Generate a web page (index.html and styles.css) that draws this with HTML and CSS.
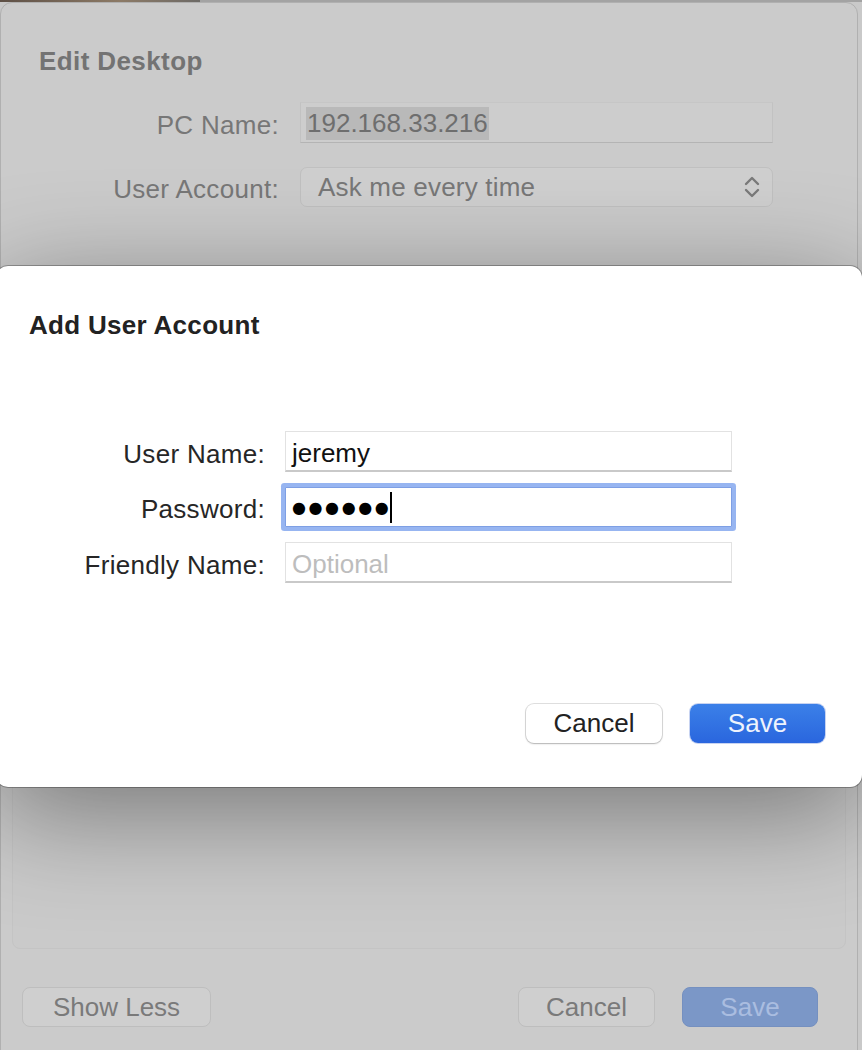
FILE: index.html
```html
<!DOCTYPE html>
<html>
<head>
<meta charset="utf-8">
<link rel="stylesheet" href="styles.css">
</head>
<body>
<div class="window">
  <div class="win-title">Edit Desktop</div>
  <div class="win-form">
    <div class="w-label">PC Name:</div>
    <div class="w-field"><span class="sel">192.168.33.216</span></div>
    <div class="w-label">User Account:</div>
    <div class="w-popup">
      <span>Ask me every time</span>
      <svg class="chev" width="16" height="24" viewBox="0 0 16 24"><path d="M2 9 L8 3 L14 9 M2 15 L8 21 L14 15" fill="none" stroke="#7a7a7a" stroke-width="2.4" stroke-linecap="round" stroke-linejoin="round"/></svg>
    </div>
  </div>
  <div class="win-box"></div>
  <div class="win-buttons">
    <div class="w-btn show-less">Show Less</div>
    <div class="spacer"></div>
    <div class="w-btn w-cancel">Cancel</div>
    <div class="w-btn w-save">Save</div>
  </div>
</div>

<div class="sheet">
  <div class="sheet-title">Add User Account</div>
  <div class="sheet-form">
    <div class="s-label">User Name:</div>
    <div class="s-field">jeremy</div>
    <div class="s-label">Password:</div>
    <div class="s-field focused"><span class="dots">●●●●●●</span><span class="caret"></span></div>
    <div class="s-label">Friendly Name:</div>
    <div class="s-field placeholder">Optional</div>
  </div>
  <div class="sheet-buttons">
    <div class="s-btn s-cancel">Cancel</div>
    <div class="s-btn s-save">Save</div>
  </div>
</div>
</body>
</html>
```
FILE: styles.css
```css
html, body {
  margin: 0;
  padding: 0;
}
body {
  width: 862px;
  height: 1050px;
  overflow: hidden;
  position: relative;
  font-family: "Liberation Sans", Arial, sans-serif;
  font-size: 26px;
  background:
    linear-gradient(to right, #5e5046 0, #8c7a66 120px, #6d6a66 200px, #a3a3a3 200px) top left / 100% 2px no-repeat,
    #c9c9c9;
}

/* ---------- background (dimmed) window ---------- */
.window {
  margin-top: 2px;
  width: 858px;
  height: 1060px;
  box-sizing: border-box;
  background: #cbcbcb;
  border: 1px solid #b0b0b0;
  border-radius: 12px;
  display: flex;
  flex-direction: column;
  color: #777;
}
.win-title {
  font-weight: bold;
  letter-spacing: 0.4px;
  line-height: 30px;
  padding: 43px 0 0 38px;
  color: #737373;
}
.win-form {
  margin-top: 26px;
  display: grid;
  grid-template-columns: 278px 473px;
  column-gap: 21px;
  row-gap: 24px;
  align-items: center;
}
.w-label {
  text-align: right;
  letter-spacing: 0.3px;
  line-height: 30px;
  padding-top: 4px;
}
.w-field {
  height: 41px;
  box-sizing: border-box;
  border: 1px solid #c2c2c2;
  border-top-color: #c6c6c6;
  border-bottom-color: #b4b4b4;
  background: #cdcdcd;
  padding: 4px 0 0 5px;
  line-height: 33px;
}
.sel {
  background: #b9b9b9;
  display: inline-block;
  padding: 0 1px;
  color: #6e6e6e;
}
.w-popup {
  height: 40px;
  box-sizing: border-box;
  border: 1px solid #c0c0c0;
  border-radius: 7px;
  background: #cfcfcf;
  padding: 0 12px 0 17px;
  display: flex;
  align-items: center;
  justify-content: space-between;
  line-height: 30px;
  letter-spacing: 0.2px;
  color: #777;
}
.chev {
  display: block;
}
.win-box {
  margin: 90px 11px 0 11px;
  height: 650px;
  background: #cacaca;
  border: 1px solid #c4c4c4;
  border-radius: 8px;
}
.win-buttons {
  margin-top: 38px;
  display: flex;
  padding: 0 39px 0 21px;
}
.spacer {
  flex: 1;
}
.w-btn {
  height: 40px;
  box-sizing: border-box;
  border: 1px solid #bebebe;
  border-radius: 8px;
  background: #cfcfcf;
  color: #7a7a7a;
  text-align: center;
  line-height: 38px;
}
.show-less {
  width: 189px;
}
.w-cancel {
  width: 137px;
}
.w-save {
  width: 136px;
  margin-left: 27px;
  background: #7b97c7;
  border-color: #7590c0;
  color: #aabde0;
}

/* ---------- sheet (modal) ---------- */
.sheet {
  position: absolute;
  top: 266px;
  left: -4px;
  width: 866px;
  height: 521px;
  box-sizing: border-box;
  background: #ffffff;
  border-radius: 12px;
  box-shadow: 0 0 0 1px rgba(0, 0, 0, 0.28), 0 24px 110px rgba(0, 0, 0, 0.42);
  display: flex;
  flex-direction: column;
  color: #222;
  padding: 0 37px 44px 0;
}
.sheet-title {
  font-weight: bold;
  letter-spacing: 0.3px;
  line-height: 30px;
  padding: 44px 0 0 33px;
  color: #222;
}
.sheet-form {
  margin-top: 91px;
  display: grid;
  grid-template-columns: 269px 447px;
  column-gap: 20px;
  row-gap: 15px;
  align-items: center;
}
.s-label {
  text-align: right;
  letter-spacing: 0.3px;
  line-height: 30px;
  padding-top: 4px;
  color: #262626;
}
.s-field {
  height: 41px;
  box-sizing: border-box;
  background: #fff;
  border: 1px solid #e2e2e2;
  border-bottom: 2px solid #c9c9c9;
  padding: 4px 0 0 6px;
  line-height: 34px;
  color: #111;
  display: flex;
  align-items: center;
}
.s-field.focused {
  height: 40px;
  border: 1px solid #7e9fe4;
  box-shadow: 0 0 0 4px #97b5f1;
  border-radius: 1px;
  padding-top: 1px;
}
.dots {
  font-family: "DejaVu Sans", sans-serif;
  font-size: 16px;
  letter-spacing: 2.6px;
  color: #000;
}
.caret {
  display: inline-block;
  width: 2px;
  height: 31px;
  background: #000;
  margin-left: -1px;
}
.placeholder {
  color: #bdbdbd;
}
.sheet-buttons {
  margin-top: auto;
  display: flex;
  justify-content: flex-end;
  gap: 28px;
}
.s-btn {
  height: 39px;
  box-sizing: border-box;
  border-radius: 8px;
  text-align: center;
  line-height: 39px;
}
.s-cancel {
  width: 136px;
  background: #fff;
  color: #222;
  box-shadow: 0 0 0 1px rgba(0, 0, 0, 0.12), 0 1px 2px rgba(0, 0, 0, 0.2);
}
.s-save {
  width: 135px;
  background: linear-gradient(to bottom, #3b80e8, #2a66de);
  color: #eef3fd;
  box-shadow: 0 0 0 1px rgba(30, 80, 200, 0.25);
}
```
